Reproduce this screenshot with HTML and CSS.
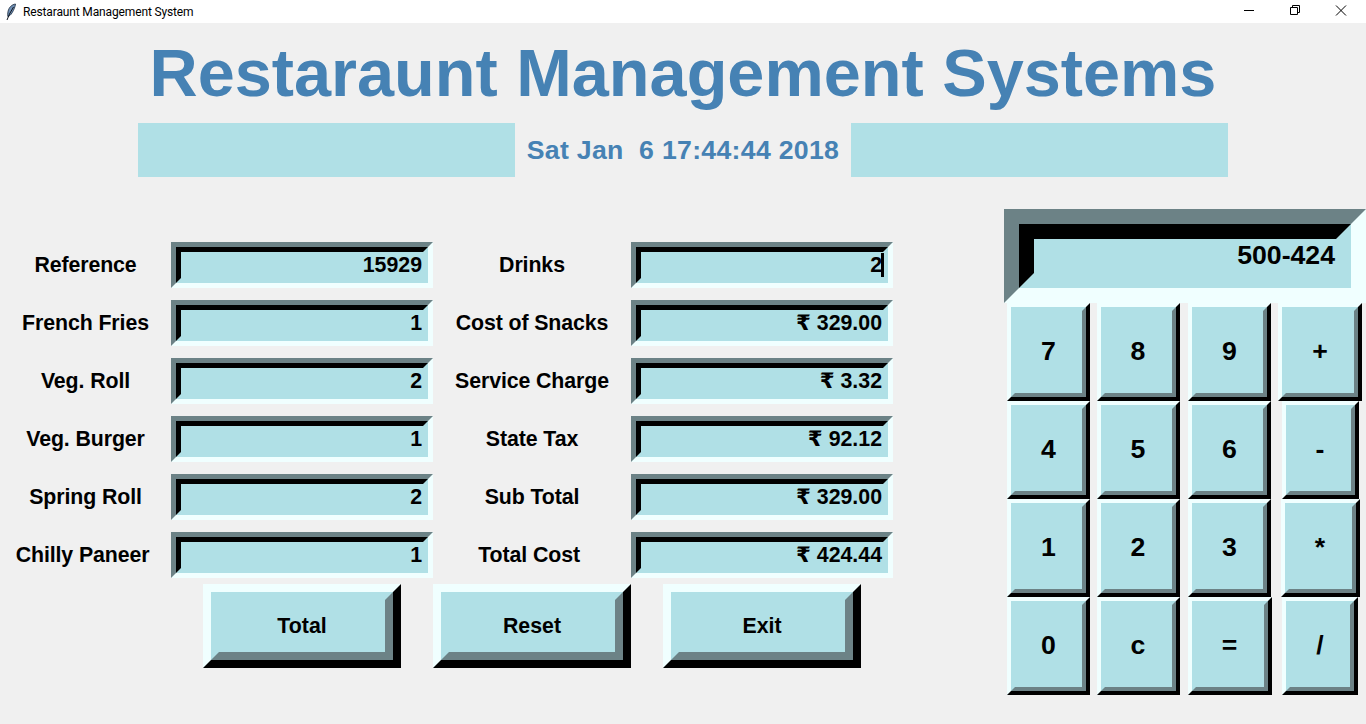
FILE: index.html
```html
<!DOCTYPE html>
<html lang="en">
<head>
  <meta charset="UTF-8">
  <meta name="viewport" content="width=device-width, initial-scale=1.0">
  <title>Restaraunt Management System</title>
  <link rel="stylesheet" href="styles.css">
</head>
<body>

  <header class="titlebar">
    <svg class="feather" width="12" height="18" viewBox="0 0 12 18">
      <path d="M10.500 1C7 1.500 4 4 3 8.500c-.4 2-.4 3.500-.2 5 1.500-.3 3-1.500 4.500-4 1.700-3 2.800-5.500 3.200-8.500z" fill="#6f8fb5" stroke="#1b2a3c" stroke-width=".8"/>
      <path d="M8.500 4 4.500 11 2 17" fill="none" stroke="#10161f" stroke-width="1"/>
    </svg>
    <span class="titlebar-text">Restaraunt Management System</span>
    <div class="win-controls">
      <svg class="win-btn" width="46" height="23" viewBox="0 0 46 23"><path d="M18 10.500h10" stroke="#000" fill="none"/></svg>
      <svg class="win-btn" width="46" height="23" viewBox="0 0 46 23"><path d="M18.500 7.500h7v7h-7zM20.500 7.500v-2h7v7h-2" stroke="#000" fill="none"/></svg>
      <svg class="win-btn" width="46" height="23" viewBox="0 0 46 23"><path d="M18 5.500l10 10M28 5.500l-10 10" stroke="#000" fill="none"/></svg>
    </div>
  </header>

  <main class="app">
    <h1 class="heading">Restaraunt Management Systems</h1>

    <div class="datebar">
      <div class="datebar-fill"></div>
      <div class="datebar-text">Sat Jan  6 17:44:44 2018</div>
      <div class="datebar-fill"></div>
    </div>

    <div class="content">
      <section class="orders">
        <div class="form-grid">
          <label class="field-label">Reference</label>
          <div class="entry"><div class="entry-in">15929</div></div>
          <label class="field-label">Drinks</label>
          <div class="entry"><div class="entry-in">2<span class="caret"></span></div></div>

          <label class="field-label">French Fries</label>
          <div class="entry"><div class="entry-in">1</div></div>
          <label class="field-label">Cost of Snacks</label>
          <div class="entry"><div class="entry-in">₹ 329.00</div></div>

          <label class="field-label">Veg. Roll</label>
          <div class="entry"><div class="entry-in">2</div></div>
          <label class="field-label">Service Charge</label>
          <div class="entry"><div class="entry-in">₹ 3.32</div></div>

          <label class="field-label">Veg. Burger</label>
          <div class="entry"><div class="entry-in">1</div></div>
          <label class="field-label">State Tax</label>
          <div class="entry"><div class="entry-in">₹ 92.12</div></div>

          <label class="field-label">Spring Roll</label>
          <div class="entry"><div class="entry-in">2</div></div>
          <label class="field-label">Sub Total</label>
          <div class="entry"><div class="entry-in">₹ 329.00</div></div>

          <label class="field-label">Chilly Paneer </label>
          <div class="entry"><div class="entry-in">1</div></div>
          <label class="field-label">Total Cost </label>
          <div class="entry"><div class="entry-in">₹ 424.44</div></div>
        </div>

        <div class="actions">
          <button class="action-btn" type="button"><span class="action-in">Total</span></button>
          <button class="action-btn" type="button"><span class="action-in">Reset</span></button>
          <button class="action-btn" type="button"><span class="action-in">Exit</span></button>
        </div>
      </section>

      <section class="calc">
        <div class="calc-display"><div class="calc-display-in">500-424</div></div>
        <div class="calc-keys">
          <button class="key" type="button"><span class="key-in">7</span></button>
          <button class="key" type="button"><span class="key-in">8</span></button>
          <button class="key" type="button"><span class="key-in">9</span></button>
          <button class="key key-plus" type="button"><span class="key-in">+</span></button>
          <button class="key" type="button"><span class="key-in">4</span></button>
          <button class="key" type="button"><span class="key-in">5</span></button>
          <button class="key" type="button"><span class="key-in">6</span></button>
          <button class="key key-minus" type="button"><span class="key-in">-</span></button>
          <button class="key" type="button"><span class="key-in">1</span></button>
          <button class="key" type="button"><span class="key-in">2</span></button>
          <button class="key" type="button"><span class="key-in">3</span></button>
          <button class="key key-times" type="button"><span class="key-in">*</span></button>
          <button class="key" type="button"><span class="key-in">0</span></button>
          <button class="key" type="button"><span class="key-in">c</span></button>
          <button class="key key-equals" type="button"><span class="key-in">=</span></button>
          <button class="key key-slash" type="button"><span class="key-in">/</span></button>
        </div>
      </section>
    </div>
  </main>

</body>
</html>
```

FILE: styles.css
```css
* {
  box-sizing: border-box;
}

html, body {
  height: 100%;
}

body {
  margin: 0;
  overflow: hidden;
  background-color: #f0f0f0;
  color: #000;
  font-family: "Liberation Sans", Arial, "DejaVu Sans", sans-serif;
}

/* window title bar */
.titlebar {
  display: flex;
  align-items: center;
  height: 23px;
  padding-left: 5px;
  background-color: #fff;
}

.feather {
  margin-right: 6px;
}

.titlebar-text {
  font-family: Roboto, sans-serif;
  font-size: 12px;
  letter-spacing: -.14px;
}

.win-controls {
  display: flex;
  margin-left: auto;
  margin-right: 2px;
}

.win-btn {
  display: block;
}

/* heading */
.heading {
  height: 100px;
  margin: 0;
  color: #4682b4;
  font-size: 66.67px;
  line-height: 100px;
  text-align: center;
}

.datebar {
  display: flex;
  height: 54px;
  padding-left: 138px;
}

.datebar-fill {
  width: 377px;
  background-color: #b0e0e6;
}

.datebar-text {
  width: 336px;
  color: #4682b4;
  font-size: 26.67px;
  font-weight: bold;
  letter-spacing: .3px;
  line-height: 54px;
  text-align: center;
  white-space: pre;
}

.content {
  display: flex;
  justify-content: space-between;
  margin-top: 32px;
}

/* order form */
.orders {
  padding-top: 33px;
}

.form-grid {
  display: grid;
  grid-template-columns: 171px 262px 198px 262px;
  grid-auto-rows: 46px;
  row-gap: 12px;
}

.field-label {
  font-size: 21.33px;
  font-weight: bold;
  letter-spacing: -.1px;
  line-height: 46px;
  text-align: center;
  white-space: pre;
}

/* sunken fields: two nested borders so the corners mitre like the tk ones */
.entry {
  border-style: solid;
  border-width: 5px;
  border-color: #6c8286 #f0ffff #f0ffff #6c8286;
}

.entry-in {
  height: 36px;
  padding-right: 1px;
  border-style: solid;
  border-width: 5px;
  border-color: #000 #b0e0e6 #b0e0e6 #000;
  background-color: #b0e0e6;
  font-size: 21.33px;
  font-weight: bold;
  line-height: 26px;
  text-align: right;
}

.caret {
  display: inline-block;
  width: 3px;
  height: 24px;
  margin-right: -2px;
  margin-left: -1px;
  background-color: #000;
  vertical-align: -5px;
}

.actions {
  display: flex;
  gap: 32px;
  margin-top: 6px;
  padding-left: 203px;
}

.action-btn {
  width: 198px;
  height: 84px;
  padding: 0;
  border-style: solid;
  border-width: 8px;
  border-color: #f0ffff #000 #000 #f0ffff;
  background-color: #b0e0e6;
  font-family: inherit;
}

.action-in {
  display: flex;
  align-items: center;
  justify-content: center;
  height: 100%;
  border-style: solid;
  border-width: 8px;
  border-color: #b0e0e6 #6c8286 #6c8286 #b0e0e6;
  font-size: 21.33px;
  font-weight: bold;
}

/* calculator */
.calc {
  width: 362px;
}

.calc-display {
  height: 94px;
  border-style: solid;
  border-width: 15px;
  border-color: #6c8286 #f0ffff #f0ffff #6c8286;
}

.calc-display-in {
  height: 64px;
  padding-right: 1px;
  border-style: solid;
  border-width: 15px;
  border-color: #000 #b0e0e6 #b0e0e6 #000;
  background-color: #b0e0e6;
  font-size: 26.67px;
  font-weight: bold;
  line-height: 32px;
  text-align: right;
}

.calc-keys {
  display: grid;
  grid-template-columns: 89px 90px 93px 88px;
  grid-auto-rows: 98px;
  justify-items: center;
}

.key {
  width: 83px;
  height: 98px;
  padding: 0;
  border-style: solid;
  border-width: 4px;
  border-color: #f0ffff #000 #000 #f0ffff;
  background-color: #b0e0e6;
  font-family: inherit;
}

.key-in {
  display: flex;
  align-items: center;
  justify-content: center;
  height: 100%;
  padding-bottom: 2px;
  border-style: solid;
  border-width: 4px;
  border-color: #b0e0e6 #6c8286 #6c8286 #b0e0e6;
  font-size: 26.67px;
  font-weight: bold;
}

.key-plus {
  width: 84px;
}

.key-minus {
  width: 77px;
}

.key-times {
  width: 79px;
}

.key-equals {
  width: 84px;
}

.key-slash {
  width: 76px;
}
```
